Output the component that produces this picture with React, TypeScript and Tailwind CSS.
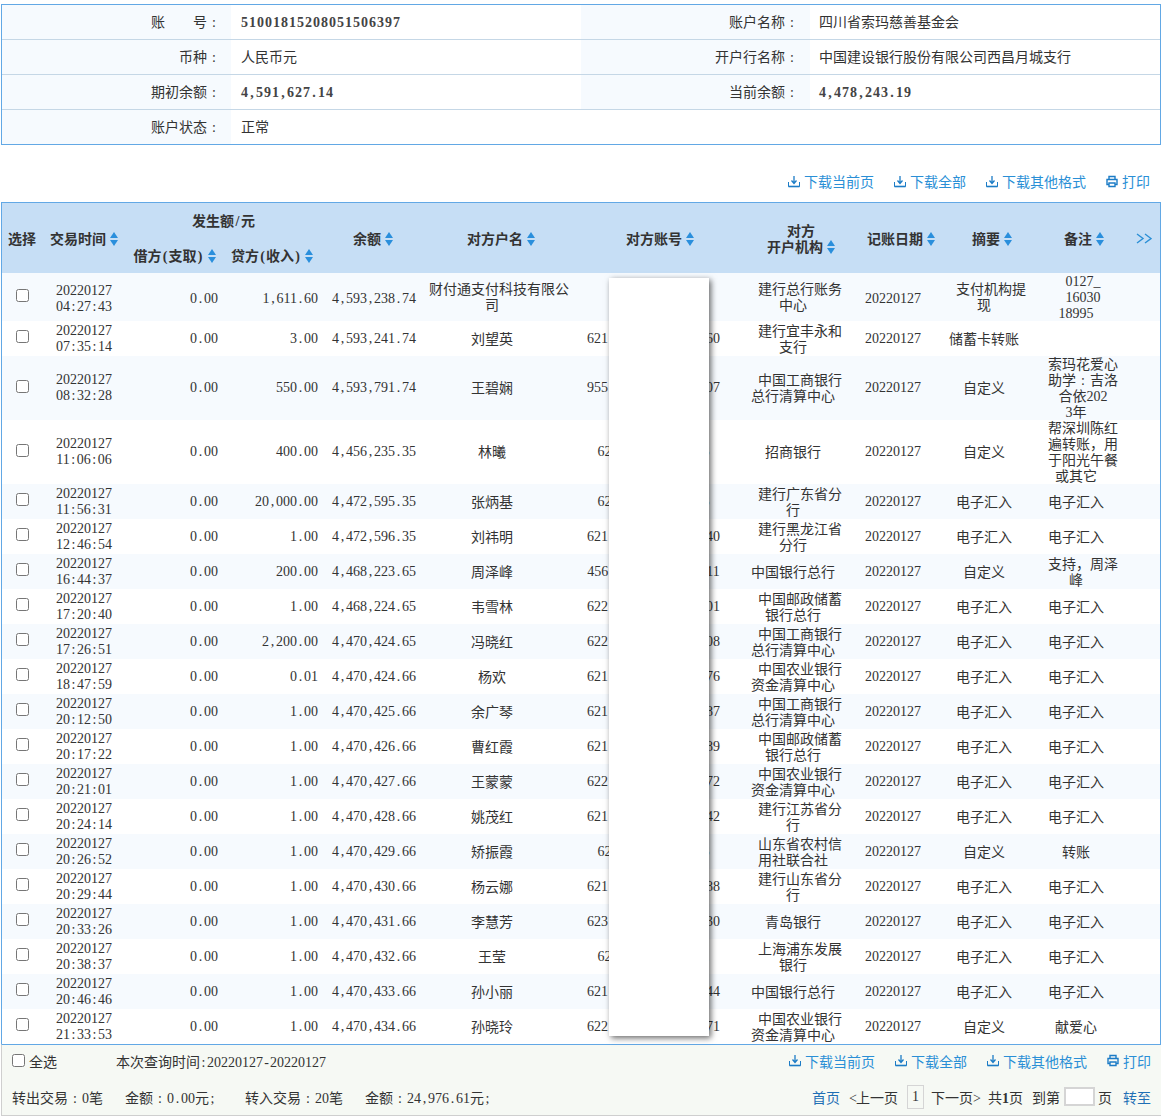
import React from "react";

const SERIF = "font-['Liberation_Serif','Noto_Sans_CJK_SC',serif]";

type Row = {
  d: string; t: string; c: string; b: string; n: string; l: string; r: string; org: string; h: string; sum: string; note: string;
};

const rows: Row[] = [
  { d: "20220127", t: "04:27:43", c: "1,611.60", b: "4,593,238.74", n: "财付通支付科技有限公|司", l: "", r: "", org: "建行总行账务|中心", h: "h-[48px]", sum: "支付机构提|现", note: "0127_|16030|18995" },
  { d: "20220127", t: "07:35:14", c: "3.00", b: "4,593,241.74", n: "刘望英", l: "621", r: "60", org: "建行宜丰永和|支行", h: "h-[35px]", sum: "储蓄卡转账", note: "" },
  { d: "20220127", t: "08:32:28", c: "550.00", b: "4,593,791.74", n: "王碧娴", l: "955", r: "07", org: "中国工商银行|总行清算中心", h: "h-[64px]", sum: "自定义", note: "索玛花爱心|助学：吉洛|合依202|3年" },
  { d: "20220127", t: "11:06:06", c: "400.00", b: "4,456,235.35", n: "林曦", l: "62", r: "3", org: "招商银行", h: "h-[64px]", sum: "自定义", note: "帮深圳陈红|遍转账，用|于阳光午餐|或其它" },
  { d: "20220127", t: "11:56:31", c: "20,000.00", b: "4,472,595.35", n: "张炳基", l: "62", r: "3", org: "建行广东省分|行", h: "h-[35px]", sum: "电子汇入", note: "电子汇入" },
  { d: "20220127", t: "12:46:54", c: "1.00", b: "4,472,596.35", n: "刘祎明", l: "621", r: "40", org: "建行黑龙江省|分行", h: "h-[35px]", sum: "电子汇入", note: "电子汇入" },
  { d: "20220127", t: "16:44:37", c: "200.00", b: "4,468,223.65", n: "周泽峰", l: "456", r: "11", org: "中国银行总行", h: "h-[35px]", sum: "自定义", note: "支持，周泽|峰" },
  { d: "20220127", t: "17:20:40", c: "1.00", b: "4,468,224.65", n: "韦雪林", l: "622", r: "01", org: "中国邮政储蓄|银行总行", h: "h-[35px]", sum: "电子汇入", note: "电子汇入" },
  { d: "20220127", t: "17:26:51", c: "2,200.00", b: "4,470,424.65", n: "冯晓红", l: "622", r: "08", org: "中国工商银行|总行清算中心", h: "h-[35px]", sum: "电子汇入", note: "电子汇入" },
  { d: "20220127", t: "18:47:59", c: "0.01", b: "4,470,424.66", n: "杨欢", l: "621", r: "76", org: "中国农业银行|资金清算中心", h: "h-[35px]", sum: "电子汇入", note: "电子汇入" },
  { d: "20220127", t: "20:12:50", c: "1.00", b: "4,470,425.66", n: "余广琴", l: "621", r: "87", org: "中国工商银行|总行清算中心", h: "h-[35px]", sum: "电子汇入", note: "电子汇入" },
  { d: "20220127", t: "20:17:22", c: "1.00", b: "4,470,426.66", n: "曹红霞", l: "621", r: "89", org: "中国邮政储蓄|银行总行", h: "h-[35px]", sum: "电子汇入", note: "电子汇入" },
  { d: "20220127", t: "20:21:01", c: "1.00", b: "4,470,427.66", n: "王蒙蒙", l: "622", r: "72", org: "中国农业银行|资金清算中心", h: "h-[35px]", sum: "电子汇入", note: "电子汇入" },
  { d: "20220127", t: "20:24:14", c: "1.00", b: "4,470,428.66", n: "姚茂红", l: "621", r: "42", org: "建行江苏省分|行", h: "h-[35px]", sum: "电子汇入", note: "电子汇入" },
  { d: "20220127", t: "20:26:52", c: "1.00", b: "4,470,429.66", n: "矫振霞", l: "62", r: "3", org: "山东省农村信|用社联合社", h: "h-[35px]", sum: "自定义", note: "转账" },
  { d: "20220127", t: "20:29:44", c: "1.00", b: "4,470,430.66", n: "杨云娜", l: "621", r: "88", org: "建行山东省分|行", h: "h-[35px]", sum: "电子汇入", note: "电子汇入" },
  { d: "20220127", t: "20:33:26", c: "1.00", b: "4,470,431.66", n: "李慧芳", l: "623", r: "30", org: "青岛银行", h: "h-[35px]", sum: "电子汇入", note: "电子汇入" },
  { d: "20220127", t: "20:38:37", c: "1.00", b: "4,470,432.66", n: "王莹", l: "62", r: "1", org: "上海浦东发展|银行", h: "h-[35px]", sum: "电子汇入", note: "电子汇入" },
  { d: "20220127", t: "20:46:46", c: "1.00", b: "4,470,433.66", n: "孙小丽", l: "621", r: "44", org: "中国银行总行", h: "h-[35px]", sum: "电子汇入", note: "电子汇入" },
  { d: "20220127", t: "21:33:53", c: "1.00", b: "4,470,434.66", n: "孙晓玲", l: "622", r: "71", org: "中国农业银行|资金清算中心", h: "h-[35px]", sum: "自定义", note: "献爱心" },
];

/* Digits in Liberation Serif are exactly half an em; punctuation is boxed to the same half em. */
function T({ s, bold }: { s: string; bold?: boolean }) {
  const parts = s.split(/([0-9_,.:;<>\-()\/：]+)/).filter(Boolean);
  return (
    <>
      {parts.map((p, i) =>
        /^[0-9_,.:;<>\-()\/：]/.test(p) ? (
          <span key={i} className={`${SERIF} ${bold ? "font-bold tracking-[1px]" : ""}`}>
            {p.split(/(?<=[^0-9_])|(?=[^0-9_])/).map((c, j) =>
              c === "：" ? (
                <span key={j} className="inline-block w-[14px] text-center">:</span>
              ) : /^[0-9_]+$/.test(c) ? (
                <React.Fragment key={j}>{c}</React.Fragment>
              ) : (
                <span key={j} className="inline-block w-[7px] text-center">{c}</span>
              )
            )}
          </span>
        ) : (
          <React.Fragment key={i}>{p}</React.Fragment>
        )
      )}
    </>
  );
}

function Lines({ s }: { s: string }) {
  const ls = s.split("|");
  return (
    <div className="flex flex-col items-center whitespace-nowrap mt-[-2px]">
      {ls.map((l, i) => (
        <span key={i} className={`block h-[16px] ${i < ls.length - 1 ? "pl-[14px]" : ""}`}><T s={l} /></span>
      ))}
    </div>
  );
}

function Sort() {
  return (
    <svg width="8" height="14" viewBox="0 0 8 14" className="inline-block align-[-2px] ml-[4px]">
      <path d="M4 0 L8 6 H0 Z" fill="#2a8fdc" />
      <path d="M0 8 H8 L4 14 Z" fill="#2a8fdc" />
    </svg>
  );
}

function DownloadIcon() {
  return (
    <svg width="12" height="13" viewBox="0 0 12 13" fill="none" className="mr-[4px]">
      <path d="M6 1 V8 M3.5 5.5 L6 8.5 L8.5 5.5" stroke="#1c7cc6" strokeWidth="1.3" />
      <path d="M0.5 7 V11.5 H11.5 V7" stroke="#1c7cc6" strokeWidth="1" />
      <path d="M0.5 11.5 H11.5" stroke="#1c7cc6" strokeWidth="1.6" />
    </svg>
  );
}

function PrintIcon() {
  return (
    <svg width="12" height="13" viewBox="0 0 12 13" fill="none" stroke="#1c7cc6" strokeWidth="1.4" className="mr-[4px]">
      <path d="M3 4 V1.5 H9 V4" />
      <path d="M3 9.5 H1 V4.5 H11 V9.5 H9" />
      <path d="M3 8 H9 V11.5 H3 Z" />
    </svg>
  );
}

function Actions() {
  return (
    <div className="flex items-center gap-[20px] text-[#2a8fd6] text-[14px]">
      <span className="flex items-center"><DownloadIcon />下载当前页</span>
      <span className="flex items-center"><DownloadIcon />下载全部</span>
      <span className="flex items-center"><DownloadIcon />下载其他格式</span>
      <span className="flex items-center"><PrintIcon />打印</span>
    </div>
  );
}

function InfoRow({ l1, v1, l2, v2, last, bold1, bold2 }: { l1: React.ReactNode; v1: string; l2?: string; v2?: string; last?: boolean; bold1?: boolean; bold2?: boolean }) {
  return (
    <div className={`flex ${last ? "h-[34px]" : "h-[35px] border-b border-[#c5d7e6]"}`}>
      <div className="w-[229px] bg-[#f6fafe] flex items-center justify-end pr-[10px] whitespace-nowrap">{l1}</div>
      <div className={`w-[350px] flex items-center pl-[10px] ${bold1 ? "text-[#444]" : ""}`}><span className={bold1 ? "" : "mt-[-2px]"}><T s={v1} bold={bold1} /></span></div>
      <div className={`w-[229px] flex items-center justify-end pr-[11px] ${last ? "bg-white" : "bg-[#f6fafe]"}`}>{l2 ? <span><T s={l2} /></span> : null}</div>
      <div className={`flex-1 flex items-center pl-[9px] ${bold2 ? "text-[#444]" : ""}`}>{v2 ? <span className={bold2 ? "" : "mt-[-2px]"}><T s={v2} bold={bold2} /></span> : null}</div>
    </div>
  );
}

const widths = [40, 84, 100, 100, 98, 136, 187, 92, 108, 74, 110, 29];

export default function App() {
  return (
    <div className="w-[1163px] h-[1118px] bg-white font-['Noto_Sans_CJK_SC','Liberation_Sans',sans-serif] text-[14px] leading-[16px] text-[#333] overflow-hidden pt-[4px] relative">
      <div className="ml-[1px] w-[1160px] border border-[#62a8e5]">
        <InfoRow l1={<span>账<span className="inline-block w-[28px]" />号<T s="：" /></span>} v1="51001815208051506397" l2="账户名称：" v2="四川省索玛慈善基金会" bold1 />
        <InfoRow l1={<span>币种<T s="：" /></span>} v1="人民币元" l2="开户行名称：" v2="中国建设银行股份有限公司西昌月城支行" />
        <InfoRow l1={<span>期初余额<T s="：" /></span>} v1="4,591,627.14" l2="当前余额：" v2="4,478,243.19" bold1 bold2 />
        <InfoRow l1={<span>账户状态<T s="：" /></span>} v1="正常" last />
      </div>

      <div className="flex justify-end h-[57px] pt-[15px] pr-[13px]"><Actions /></div>

      <div className="ml-[1px] w-[1160px] border-x border-t border-[#62a8e5] h-[842px] overflow-hidden">
        <table className="border-collapse table-fixed w-[1158px]">
          <colgroup>
            {widths.map((w, i) => <col key={i} style={{ width: w }} />)}
          </colgroup>
          <thead className="bg-[#c6def5] text-[#333]">
            <tr className="h-[35px]">
              <th rowSpan={2} className="font-bold whitespace-nowrap">选择</th>
              <th rowSpan={2} className="font-bold whitespace-nowrap">交易时间<Sort /></th>
              <th colSpan={2} className="font-bold pr-[5px]">发生额<T s="/" />元</th>
              <th rowSpan={2} className="font-bold pr-[4px]">余额<Sort /></th>
              <th rowSpan={2} className="font-bold pl-[18px] whitespace-nowrap">对方户名<Sort /></th>
              <th rowSpan={2} className="font-bold pl-[13px] whitespace-nowrap">对方账号<Sort /></th>
              <th rowSpan={2} className="font-bold whitespace-nowrap"><div className="ml-[-16px] mr-[-32px]">对方<br />开户机构<Sort /></div></th>
              <th rowSpan={2} className="font-bold pl-[16px] whitespace-nowrap">记账日期<Sort /></th>
              <th rowSpan={2} className="font-bold pl-[16px] whitespace-nowrap">摘要<Sort /></th>
              <th rowSpan={2} className="font-bold pl-[16px] whitespace-nowrap">备注<Sort /></th>
              <th rowSpan={2} className="font-normal">
                <svg width="16" height="11" viewBox="0 0 16 11" fill="none" stroke="#2a8fd6" strokeWidth="1.4" className="inline-block ml-[-4px] mb-[2px]">
                  <path d="M1 1 L7 5.5 L1 10" />
                  <path d="M9 1 L15 5.5 L9 10" />
                </svg>
              </th>
            </tr>
            <tr className="h-[35px]">
              <th className="font-bold whitespace-nowrap pr-[3px]">借方<T s="(" />支取<T s=")" /><Sort /></th>
              <th className="font-bold whitespace-nowrap pr-[8px]">贷方<T s="(" />收入<T s=")" /><Sort /></th>
            </tr>
          </thead>
          <tbody>
            {rows.map((r, i) => {
              const drop = i === 0 ? "pt-[3px]" : "";
              return (
                <tr key={i} className={`${r.h} ${i % 2 === 0 ? "bg-[#f6fafe]" : "bg-white"}`}>
                  <td className="text-center"><input type="checkbox" className="w-[13px] h-[13px] align-middle mb-[5px]" /></td>
                  <td className={`text-center whitespace-nowrap ${SERIF} ${drop}`}>
                    <div className="h-[16px]">{r.d}</div>
                    <div className="h-[16px]"><T s={r.t} /></div>
                  </td>
                  <td className={`text-right pr-[8px] ${SERIF} ${drop}`}><div className="h-[16px]"><T s="0.00" /></div></td>
                  <td className={`text-right pr-[8px] ${SERIF} ${drop}`}><div className="h-[16px]"><T s={r.c} /></div></td>
                  <td className={`text-right pr-[8px] whitespace-nowrap ${SERIF} ${drop}`}><div className="h-[16px]"><T s={r.b} /></div></td>
                  <td><Lines s={r.n} /></td>
                  <td className="text-center whitespace-nowrap">
                    {r.l ? (
                      <div className={`${SERIF} h-[16px]`}>
                        {r.l}
                        <span className={`inline-block ${r.r.length === 2 ? "w-[98px]" : "w-[91px]"}`} />
                        {r.r}
                      </div>
                    ) : null}
                  </td>
                  <td><Lines s={r.org} /></td>
                  <td className={`text-center ${SERIF} ${drop}`}><div className="h-[16px]">{r.d}</div></td>
                  <td><Lines s={r.sum} /></td>
                  <td>{r.note ? <Lines s={r.note} /> : null}</td>
                  <td />
                </tr>
              );
            })}
          </tbody>
        </table>
      </div>

      <div className="ml-[1px] w-[1160px] h-[72px] bg-[#f6f9f4] border-t border-t-[#62a8e5] border-b border-b-[#cfcfcf] border-l border-l-[#cfcfcf] pl-[10px] pr-[10px]">
        <div className="flex items-center justify-between h-[31px]">
          <div className="flex items-center">
            <input type="checkbox" className="w-[13px] h-[13px] mr-[4px]" />
            <span>全选</span>
            <span className="ml-[59px] h-[16px]"><T s="本次查询时间:20220127-20220127" /></span>
          </div>
          <Actions />
        </div>
        <div className="flex items-center justify-between h-[37px] mt-[2px]">
          <div className="flex items-center">
            <span className="h-[16px]"><T s="转出交易：0笔" /></span>
            <span className="ml-[22px] h-[16px]"><T s="金额：0.00元;" /></span>
            <span className="ml-[29px] h-[16px]"><T s="转入交易：20笔" /></span>
            <span className="ml-[22px] h-[16px]"><T s="金额：24,976.61元;" /></span>
          </div>
          <div className="flex items-center">
            <span className="text-[#1f6fb5]">首页</span>
            <span className="ml-[9px] h-[16px]"><T s="<上一页" /></span>
            <span className={`ml-[9px] w-[17px] h-[24px] border border-[#d5d5d5] flex items-center justify-center ${SERIF}`}>1</span>
            <span className="ml-[7px] h-[16px]"><T s="下一页>" /></span>
            <span className="ml-[8px] h-[16px]">共<b className={SERIF}>1</b>页</span>
            <span className="ml-[9px]">到第</span>
            <span className="ml-[4px] w-[31px] h-[19px] bg-white border-2 border-[#d5d5d5]" />
            <span className="ml-[3px]">页</span>
            <span className="ml-[11px] text-[#1f6fb5]">转至</span>
          </div>
        </div>
      </div>

      <div className="absolute left-[609px] top-[278px] w-[100px] h-[758px] bg-white shadow-[2px_2px_6px_rgba(0,0,0,0.6)]" />
    </div>
  );
}
